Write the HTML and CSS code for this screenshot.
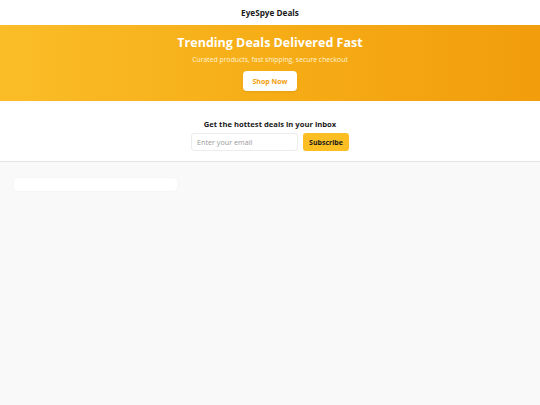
FILE: index.html
```html
<!DOCTYPE html>
<html>
<head>
<meta charset="utf-8">
<link rel="stylesheet" href="styles.css">
</head>
<body>
<header class="topbar"><span class="brand">EyeSpye Deals</span></header>
<section class="hero">
  <h1 class="hero-title">Trending Deals Delivered Fast</h1>
  <p class="hero-sub">Curated products, fast shipping, secure checkout</p>
  <a class="hero-btn">Shop Now</a>
</section>
<section class="newsletter">
  <h2 class="nl-title">Get the hottest deals in your inbox</h2>
  <form class="nl-form">
    <input class="nl-input" type="text" placeholder="Enter your email">
    <button class="nl-btn" type="button">Subscribe</button>
  </form>
</section>
<main class="content">
  <div class="card"></div>
</main>
</body>
</html>
```
FILE: styles.css
```css
* { box-sizing: border-box; }
html, body { margin: 0; padding: 0; }
body {
  font-family: "Open Sans", "Noto Sans", sans-serif;
  background: #f9f9f9;
  min-height: 405px;
}
.topbar {
  height: 25px;
  background: #fff;
  display: flex;
  align-items: center;
  justify-content: center;
}
.brand {
  font-size: 8.2px;
  font-weight: 700;
  color: #1a1a1a;
}
.hero {
  height: 76px;
  background: linear-gradient(90deg, #fabd28 0%, #f6ad16 50%, #f29d0c 100%);
  display: flex;
  flex-direction: column;
  align-items: center;
  padding-top: 9px;
  color: #fff;
}
.hero-title {
  margin: 0;
  font-size: 12.5px;
  line-height: 18px;
  font-weight: 700;
}
.hero-sub {
  margin: 3px 0 0;
  font-size: 6.85px;
  line-height: 10px;
  color: #fff3d6;
}
.hero-btn {
  margin-top: 6px;
  width: 54px;
  height: 20px;
  background: #fff;
  border-radius: 4px;
  color: #f29d0c;
  font-size: 7px;
  font-weight: 700;
  display: flex;
  align-items: center;
  justify-content: center;
  box-shadow: 0 1px 2px rgba(0,0,0,0.08);
}
.newsletter {
  height: 61px;
  background: #fff;
  border-bottom: 1px solid #e5e5e5;
  display: flex;
  flex-direction: column;
  align-items: center;
  padding-top: 18px;
}
.nl-title {
  margin: 0;
  font-size: 7.65px;
  line-height: 11px;
  font-weight: 700;
  color: #1a1a1a;
}
.nl-form {
  margin: 3px 0 0;
  display: flex;
  gap: 5px;
}
.nl-input {
  width: 107px;
  height: 18px;
  border: 1px solid #ececec;
  border-radius: 3px;
  padding: 0 5px;
  font-family: inherit;
  font-size: 7.2px;
  color: #333;
  outline: none;
}
.nl-input::placeholder { color: #9a9a9a; }
.nl-btn {
  width: 46px;
  height: 18px;
  border: none;
  border-radius: 3px;
  background: #fbbf24;
  color: #1a1a1a;
  font-family: inherit;
  font-size: 7px;
  font-weight: 700;
  padding: 0;
}
.content {
  padding: 16px 14px;
}
.card {
  width: 163px;
  height: 13px;
  background: #fff;
  border-radius: 4px;
  box-shadow: 0 0 2px rgba(0,0,0,0.05);
}
```
